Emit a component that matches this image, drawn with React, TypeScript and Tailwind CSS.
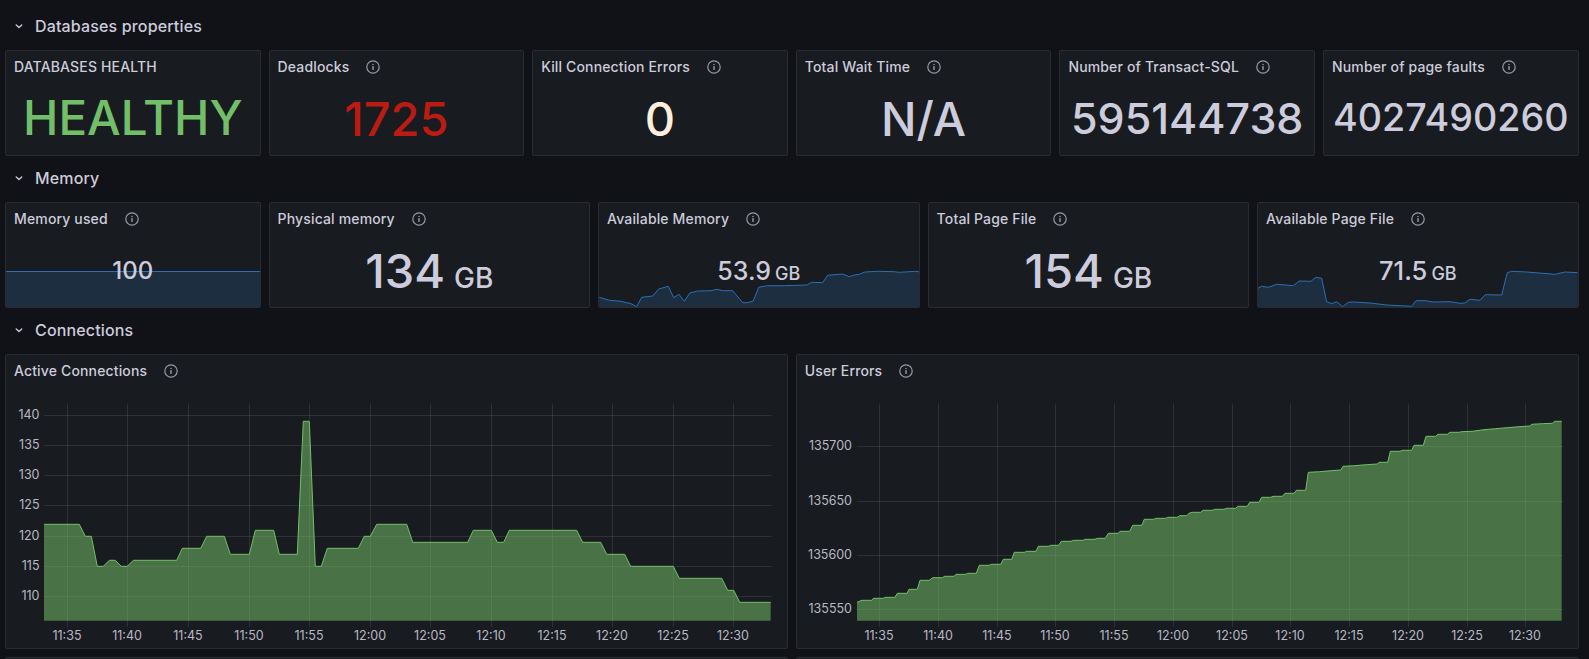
import React from "react";

const GRID = "rgba(204,204,220,0.12)";
const FONT = { fontFamily: "Inter, 'Noto Sans', sans-serif" };

function Info() {
  return (
    <svg width="16" height="16" viewBox="0 0 16 16" fill="none" className="shrink-0 ml-4" stroke="#9a9aa6">
      <circle cx="8" cy="8" r="6.2" strokeWidth="1.2" />
      <path d="M8 7.6v2.8" strokeWidth="1.4" strokeLinecap="round" />
      <circle cx="8" cy="5.5" r="0.75" fill="#9a9aa6" stroke="none" />
    </svg>
  );
}

function Chevron() {
  return (
    <svg width="16" height="16" viewBox="0 0 16 16" fill="none" className="shrink-0">
      <path d="M5.2 7l2.8 2.6L10.8 7" stroke="#ccccdc" strokeWidth="1.3" strokeLinecap="round" strokeLinejoin="round" />
    </svg>
  );
}

function RowHeading({ children }: { children: React.ReactNode }) {
  return (
    <div className="h-[30px] flex items-center pl-[6px] pb-[2px] gap-[8px] my-[8px] text-[16px] tracking-[0.15px] font-medium text-[#ccccdc]">
      <Chevron />
      <span>{children}</span>
    </div>
  );
}

function Title({ text, info = true }: { text: string; info?: boolean }) {
  return (
    <div className="h-8 shrink-0 flex items-center px-2 pb-[1px] text-[14px] tracking-[0.15px] font-medium text-[#ccccdc] whitespace-nowrap relative z-10">
      <span>{text}</span>
      {info && <Info />}
    </div>
  );
}

function StatPanel({
  title,
  value,
  unit,
  color,
  size,
  info,
}: {
  title: string;
  value: string;
  unit?: string;
  color: string;
  size: string;
  info?: boolean;
}) {
  return (
    <div className="h-[106px] bg-[#181b1f] border border-[#2a2c31] rounded-[2px] flex flex-col overflow-hidden">
      <Title text={title} info={info} />
      <div className={`flex-1 flex items-center justify-center whitespace-nowrap font-medium leading-none pb-[2px] ${size}`} style={{ color }}>
        <span>
          {value}
          {unit && <span className="text-[28px] ml-[9px]">{unit}</span>}
        </span>
      </div>
    </div>
  );
}

type Pt = [number, number];

function Sparkline({ pts, ox, w }: { pts: Pt[]; ox: number; w: number }) {
  const map = (p: Pt) => `${(p[0] / 3 + ox).toFixed(1)},${(p[1] / 3 + 195).toFixed(1)}`;
  const line = pts.map(map).join(" ");
  const area = `${map([pts[0][0], 337])} ${line} ${map([pts[pts.length - 1][0], 337])}`;
  return (
    <svg className="absolute left-0 bottom-0" width={w} height="72" viewBox={`${ox + 25 / 3 - 0.3} 235 ${w} 72`}>
      <polygon points={area} fill="#1c2e40" />
      <polyline points={line} fill="none" stroke="#2a70b4" strokeWidth="1" />
    </svg>
  );
}

function SparkPanel({
  title,
  value,
  unit,
  size,
  children,
}: {
  title: string;
  value: string;
  unit?: string;
  size: string;
  children?: React.ReactNode;
}) {
  return (
    <div className="h-[106px] bg-[#181b1f] border border-[#2a2c31] rounded-[2px] flex flex-col overflow-hidden relative">
      {children}
      <Title text={title} />
      <div className={`flex-1 flex items-center justify-center whitespace-nowrap font-medium leading-none text-[#ccccdc] relative z-10 ${size}`}>
        <span>
          {value}
          {unit && <span className="text-[18px] ml-[4px]">{unit}</span>}
        </span>
      </div>
    </div>
  );
}

const memPts: Pt[] = [
  [25, 307], [55, 316], [90, 319], [120, 326], [137, 335], [152, 307], [185, 303], [203, 282], [232, 274], [248, 308],
  [264, 298], [280, 319], [297, 294], [320, 288], [360, 287], [378, 283], [395, 287], [425, 287], [455, 323], [470, 323],
  [487, 318], [503, 277], [530, 272], [580, 272], [648, 270], [662, 262], [695, 263], [710, 241], [755, 237], [775, 245],
  [790, 240], [805, 238], [822, 231], [860, 229], [910, 230], [925, 232], [975, 229], [986, 231],
];

const pagePts: Pt[] = [
  [22, 281], [35, 274], [55, 277], [80, 268], [130, 272], [148, 258], [183, 259], [197, 247], [215, 250], [230, 320],
  [245, 326], [260, 320], [278, 335], [295, 322], [310, 321], [360, 324], [410, 330], [485, 334], [498, 317], [525, 317],
  [550, 321], [600, 320], [630, 325], [645, 324], [660, 313], [690, 316], [706, 299], [755, 300], [772, 233], [785, 229],
  [830, 231], [915, 238], [945, 231], [983, 233],
];

const activePts: Pt[] = [
  [132, 403], [238, 403], [256, 439], [274, 439], [292, 529], [310, 529], [328, 511], [346, 511], [364, 529], [382, 529],
  [400, 511], [530, 511], [547, 475], [602, 475], [620, 439], [673, 439], [691, 493], [748, 493], [766, 421], [821, 421],
  [838, 493], [892, 493], [910, 94], [928, 94], [946, 529], [964, 529], [982, 475], [1075, 475], [1093, 439], [1111, 439],
  [1130, 403], [1220, 403], [1238, 457], [1403, 457], [1420, 421], [1474, 421], [1492, 457], [1511, 457], [1528, 421],
  [1730, 421], [1748, 457], [1802, 457], [1820, 493], [1874, 493], [1892, 529], [2020, 529], [2038, 565], [2165, 565],
  [2183, 601], [2201, 601], [2219, 637], [2312, 637],
];

const userA: Pt[] = [
  [201, 637], [216, 631], [245, 631], [250, 625], [280, 625], [285, 622], [315, 622], [322, 610], [351, 610], [357, 598],
  [382, 598], [390, 571], [418, 571], [428, 563], [457, 563], [464, 559], [492, 559], [498, 553], [527, 553], [533, 550],
  [559, 550], [568, 526], [597, 526], [604, 523], [632, 523], [640, 508], [665, 508], [673, 487], [703, 487], [710, 484],
  [738, 484], [745, 469], [775, 469], [782, 466], [806, 466], [814, 454], [843, 454], [850, 451], [879, 451], [886, 448],
  [915, 448], [922, 445], [946, 445], [955, 430], [985, 430], [990, 424], [1019, 424], [1028, 406], [1055, 406], [1063, 388],
  [1091, 388], [1098, 385], [1127, 385], [1133, 382], [1162, 382], [1169, 377], [1190, 377],
];
const userB: Pt[] = [
  [0, 370], [10, 367], [35, 367], [42, 361], [70, 361], [77, 358], [105, 358], [112, 355], [140, 355], [146, 349], [175, 349],
  [182, 337], [210, 337], [218, 322], [245, 322], [252, 319], [280, 319], [288, 310], [315, 310], [322, 301], [350, 301],
  [358, 247], [392, 245], [427, 242], [455, 240], [462, 229], [497, 227], [532, 224], [565, 222], [570, 217], [596, 217],
  [604, 184], [633, 184], [640, 181], [668, 181], [675, 166], [703, 166], [711, 139], [740, 139], [747, 133], [775, 133],
  [782, 127], [810, 127], [817, 125], [850, 124], [885, 119], [920, 116], [955, 113], [990, 110], [1022, 108], [1028, 103],
  [1060, 101], [1090, 100], [1097, 94], [1118, 94],
];
const userPts: Pt[] = [...userA, ...userB.map(([x, y]) => [x + 1197, y] as Pt)];

const times = ["11:35", "11:40", "11:45", "11:50", "11:55", "12:00", "12:05", "12:10", "12:15", "12:20", "12:25", "12:30"];

function Chart({
  vb,
  ox,
  pts,
  xs,
  ys,
  labelX,
  left,
  right,
}: {
  vb: string;
  ox: number;
  pts: Pt[];
  xs: number[];
  ys: [string, number][];
  labelX: number;
  left: number;
  right: number;
}) {
  const map = (p: Pt) => `${(p[0] / 3 + ox).toFixed(1)},${(p[1] / 3 + 390).toFixed(1)}`;
  const line = pts.map(map).join(" ");
  const base = 620.7;
  const a = pts[0][0] / 3 + ox;
  const b = pts[pts.length - 1][0] / 3 + ox;
  return (
    <svg className="block w-[781px] h-[261px]" viewBox={vb} style={FONT}>
      {xs.map((x) => (
        <line key={x} x1={x + 0.5} x2={x + 0.5} y1={403.5} y2={627} stroke={GRID} />
      ))}
      {ys.map(([, y]) => (
        <line key={y} x1={left} x2={right} y1={y + 0.5} y2={y + 0.5} stroke={GRID} />
      ))}
      <polygon points={`${a},${base} ${line} ${b},${base}`} fill="#73BF69" fillOpacity="0.54" />
      <polyline points={line} fill="none" stroke="#73BF69" strokeWidth="1" />
      {ys.map(([t, y]) => (
        <text key={t} x={labelX} y={y + 4} textAnchor="end" fontSize="12.5" fill="#b8b8c4">
          {t}
        </text>
      ))}
      {xs.map((x, i) => (
        <text key={x} x={x} y={639.5} textAnchor="middle" fontSize="12.5" fill="#b8b8c4">
          {times[i]}
        </text>
      ))}
    </svg>
  );
}

export default function App() {
  return (
    <div className="h-[659px] overflow-hidden bg-[#111217] pl-[5px] pr-[10.4px] pt-[4px]" style={FONT}>
      <RowHeading>Databases properties</RowHeading>
      <div className="grid grid-cols-6 gap-[8px]">
        <StatPanel title="DATABASES HEALTH" info={false} value="HEALTHY" color="#73BF69" size="text-[47.5px]" />
        <StatPanel title="Deadlocks" value="1725" color="#bb1b12" size="text-[47px]" />
        <StatPanel title="Kill Connection Errors" value="0" color="#ffeedd" size="text-[47px]" />
        <StatPanel title="Total Wait Time" value="N/A" color="#ccccdc" size="text-[47px]" />
        <StatPanel title="Number of Transact-SQL" value="595144738" color="#ccccdc" size="text-[43px]" />
        <StatPanel title="Number of page faults" value="4027490260" color="#ccccdc" size="text-[37.7px]" />
      </div>

      <RowHeading>Memory</RowHeading>
      <div className="grid grid-cols-24 gap-[8px]">
        <div className="col-span-4">
          <SparkPanel title="Memory used" value="100" size="text-[24px]">
            <div className="absolute left-0 right-0 bottom-0 h-[36px] bg-[#1c2e40] border-t border-[#2a70b4]" />
          </SparkPanel>
        </div>
        <div className="col-span-5">
          <StatPanel title="Physical memory" value="134" unit="GB" color="#ccccdc" size="text-[47px]" />
        </div>
        <div className="col-span-5">
          <SparkPanel title="Available Memory" value="53.9" unit="GB" size="text-[25px]">
            <Sparkline pts={memPts} ox={590} w={320} />
          </SparkPanel>
        </div>
        <div className="col-span-5">
          <StatPanel title="Total Page File" value="154" unit="GB" color="#ccccdc" size="text-[47px]" />
        </div>
        <div className="col-span-5">
          <SparkPanel title="Available Page File" value="71.5" unit="GB" size="text-[25.5px]">
            <Sparkline pts={pagePts} ox={1250} w={320} />
          </SparkPanel>
        </div>
      </div>

      <RowHeading>Connections</RowHeading>
      <div className="grid grid-cols-2 gap-[8px]">
        <div className="h-[295px] bg-[#181b1f] border border-[#2a2c31] rounded-[2px] flex flex-col overflow-hidden">
          <Title text="Active Connections" />
          <Chart
            vb="6 387 781 261"
            ox={0}
            pts={activePts}
            xs={[67, 127, 188, 249, 309, 370, 430, 491, 552, 612, 673, 733]}
            ys={[["140", 415], ["135", 445], ["130", 475], ["125", 505], ["120", 536], ["115", 566], ["110", 596]]}
            labelX={39.5}
            left={44}
            right={771.5}
          />
        </div>
        <div className="h-[295px] bg-[#181b1f] border border-[#2a2c31] rounded-[2px] flex flex-col overflow-hidden">
          <Title text="User Errors" />
          <Chart
            vb="797 387 781 261"
            ox={790}
            pts={userPts}
            xs={[879, 938, 997, 1055, 1114, 1173, 1232, 1290, 1349, 1408, 1467, 1525]}
            ys={[["135700", 446], ["135650", 501], ["135600", 555], ["135550", 609]]}
            labelX={852}
            left={857}
            right={1563}
          />
        </div>
      </div>
      <div className="grid grid-cols-2 gap-[8px] mt-[8px]">
        <div className="h-[20px] bg-[#181b1f] border border-[#2a2c31] rounded-[2px]" />
        <div className="h-[20px] bg-[#181b1f] border border-[#2a2c31] rounded-[2px]" />
      </div>
    </div>
  );
}
